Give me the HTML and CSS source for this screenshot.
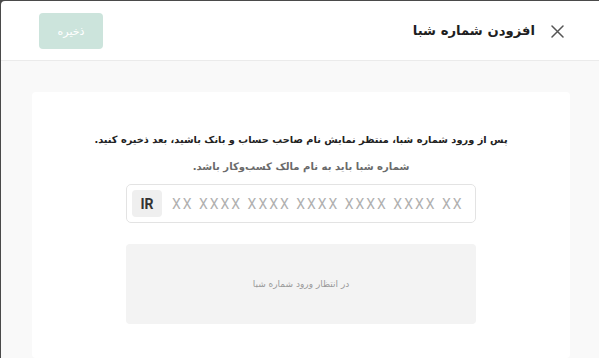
FILE: index.html
```html
<!DOCTYPE html>
<html lang="fa" dir="rtl">
<head>
<meta charset="utf-8">
<title>افزودن شماره شبا</title>
<link rel="stylesheet" href="styles.css">
</head>
<body>
<div class="modal">
  <header class="modal-header">
    <div class="title-group">
      <button class="close-btn" aria-label="بستن">
        <svg width="13" height="13" viewBox="0 0 13 13"><path d="M1 1L12 12M12 1L1 12" stroke="#555" stroke-width="1.5" fill="none" stroke-linecap="round"/></svg>
      </button>
      <h1 class="modal-title">افزودن شماره شبا</h1>
    </div>
    <button class="save-btn" disabled>ذخیره</button>
  </header>
  <main class="modal-body">
    <section class="card">
      <p class="lead">پس از ورود شماره شبا، منتظر نمایش نام صاحب حساب و بانک باشید، بعد ذخیره کنید.</p>
      <p class="hint">شماره شبا باید به نام مالک کسب‌وکار باشد.</p>
      <div class="iban-field" dir="ltr">
        <span class="iban-prefix">IR</span>
        <input class="iban-input" type="text" placeholder="XX XXXX XXXX XXXX XXXX XXXX XX">
      </div>
      <div class="waiting-box">در انتظار ورود شماره شبا</div>
    </section>
  </main>
</div>
</body>
</html>
```

FILE: styles.css
```css
* { box-sizing: border-box; }
html, body {
  margin: 0;
  height: 100%;
}
body {
  background: #4a4a4a;
  overflow: hidden;
  font-family: "DejaVu Sans", "Noto Sans", sans-serif;
}
.modal {
  margin: 1px 0 0 1px;
  height: 357px;
  background: #ffffff;
  border-top-left-radius: 4px;
  display: flex;
  flex-direction: column;
  overflow: hidden;
}
.modal-header {
  height: 60px;
  flex: none;
  border-bottom: 1px solid #ebebeb;
  display: flex;
  align-items: center;
  justify-content: space-between;
  padding: 0 35px 0 38px;
}
.title-group {
  display: flex;
  align-items: center;
  gap: 16px;
}
.close-btn {
  border: 0;
  background: none;
  padding: 0;
  width: 13px;
  height: 13px;
  display: flex;
  margin-top: 2px;
}
.modal-title {
  margin: 0;
  font-size: 13.2px;
  font-weight: bold;
  color: #1f1f1f;
}
.save-btn {
  width: 64px;
  height: 36px;
  border: 0;
  border-radius: 4px;
  background: #cce4dc;
  color: #ffffff;
  font-family: "DejaVu Sans", sans-serif;
  font-size: 11px;
  margin-top: 1px;
}
.modal-body {
  flex: 1;
  background: #f9f9f9;
  padding: 31px 29px 0 31px;
}
.card {
  background: #ffffff;
  border-radius: 4px;
  height: 100%;
  padding-top: 38px;
  display: flex;
  flex-direction: column;
  align-items: center;
}
.lead {
  margin: 0;
  line-height: 20px;
  font-size: 9.8px;
  font-weight: bold;
  color: #222;
}
.hint {
  margin: 7px 0 0;
  line-height: 20px;
  font-size: 10.1px;
  font-weight: bold;
  color: #6a6a6a;
}
.iban-field {
  margin-top: 7px;
  width: 350px;
  height: 39px;
  border: 1px solid #e3e3e3;
  border-radius: 5px;
  display: flex;
  align-items: center;
  padding: 0 5px;
  gap: 10px;
}
.iban-prefix {
  width: 30px;
  height: 27px;
  background: #efefef;
  border-radius: 4px;
  display: flex;
  align-items: center;
  justify-content: center;
  font-family: Roboto, "Liberation Sans", sans-serif;
  font-weight: bold;
  font-size: 14px;
  color: #333;
}
.iban-input {
  flex: 1;
  min-width: 0;
  border: 0;
  outline: none;
  background: transparent;
  font-family: Roboto, "Liberation Sans", sans-serif;
  font-size: 14px;
  letter-spacing: 2px;
  padding: 0;
  color: #333;
}
.iban-input::placeholder { color: #b0b0b0; }
.waiting-box {
  margin-top: 21px;
  width: 350px;
  height: 80px;
  background: #f3f3f3;
  border-radius: 4px;
  display: flex;
  align-items: center;
  justify-content: center;
  font-size: 9px;
  color: #9a9a9a;
}
```
